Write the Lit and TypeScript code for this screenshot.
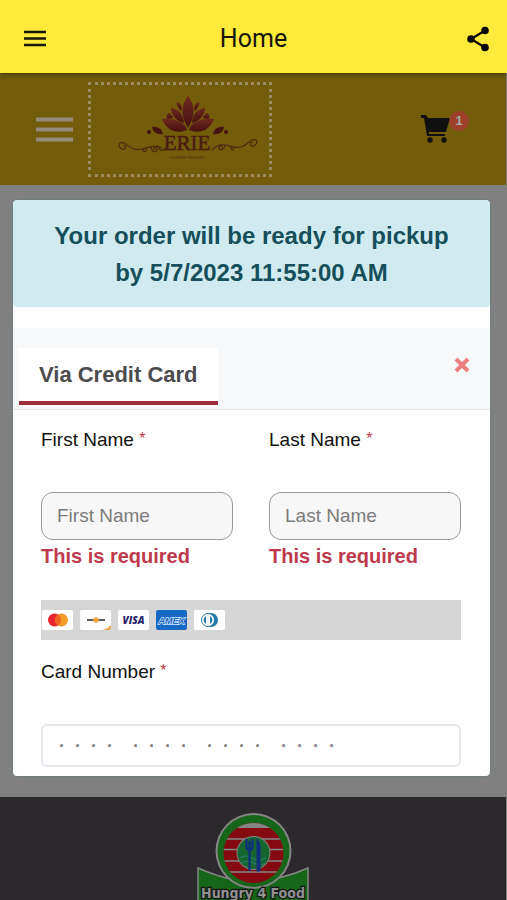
import { LitElement, html, css, svg } from "lit";
import { customElement, property } from "lit/decorators.js";

@customElement("name-field")
class NameField extends LitElement {
  @property() label = "";

  static styles = css`
    :host { display: block; min-width: 0; font-size: 19px; }
    .label { display: block; line-height: 24px; color: #111; }
    .star { color: #b83a4b; font-size: 16px; line-height: 16px; vertical-align: 2px; }
    .box {
      display: block; box-sizing: border-box; width: 100%; height: 48px;
      margin-top: 40px; padding: 0 15px; border: 1px solid #999;
      border-radius: 12px; background: #f7f7f8; font: inherit; color: #111;
    }
    .box::placeholder { color: #7b7b7b; opacity: 1; }
    .error { margin: 4px 0 0; font-size: 20px; line-height: 24px; font-weight: 700; color: #bd3a4c; }
  `;

  render() {
    return html`
      <label class="label" for="field">${this.label} <span class="star">*</span></label>
      <input id="field" class="box" type="text" placeholder=${this.label} />
      <p class="error">This is required</p>
    `;
  }
}

const menuIcon = svg`<path d="M1 2h22M1 8.500h22M1 15h22" stroke="#17150a" stroke-width="2.500"/>`;

const lotus = svg`
  <linearGradient id="petal" x1="0" y1="0" x2="0" y2="1">
    <stop offset="0" stop-color="#6e2a1e"/><stop offset="1" stop-color="#47110f"/>
  </linearGradient>
  <g fill="url(#petal)">
    <path d="M188 96c-7 9-8 19 0 32c8-13 7-23 0-32z"/>
    <path d="M184 123c-1-9-5-14-13-15c0 7 5 13 13 15zM192 123c1-9 5-14 13-15c0 7-5 13-13 15z"/>
    <path d="M177 102c-1 3 1 6 4 9c2-4 0-8-4-9zM199 102c1 3-1 6-4 9c-2-4 0-8 4-9z"/>
    <path d="M169 113c-3 1-3 5-1 6l5-1c0-2-2-4-4-5zM207 113c3 1 3 5 1 6l-5-1c0-2 2-4 4-5z"/>
    <path d="M187 130c-2-8-12-12-25-11c4 10 13 16 25 11zM189 130c2-8 12-12 25-11c-4 10-13 16-25 11z"/>
  </g>
  <g fill="#471311">
    <path d="M152 127c6-1 10 2 11 7c-6 1-10-2-11-7zM224 127c-6-1-10 2-11 7c6 1 10-2 11-7z"/>
    <circle cx="149" cy="132" r="2"/><circle cx="226" cy="132" r="2"/>
  </g>
  <g fill="none" stroke="#4b2a14" stroke-width="1.200">
    <path d="M124 145c3 3 1 5-2 4c-5-3-3-8 2-6c6 4 10 8 18 6c9-2 14-5 20-1"/>
    <path d="M143 149c0 4 4 3 3-1M151 147c1 6 6 6 6 2c-1-3-4-1-3 1M158 147c2 4 5 4 8 1"/>
    <path d="M252 142c-3 3-1 5 2 4c5-3 3-8-2-6c-6 4-10 9-18 7c-9-2-14-5-22 3"/>
    <path d="M234 147c0 4-4 3-3-1M225 145c-1 6-6 6-6 2c1-3 4-1 3 1"/>
  </g>
  <text x="187" y="150" text-anchor="middle" font-family="Liberation Serif, serif" font-size="21" fill="#4b1b14" stroke="#4b1b14" stroke-width="0.500">ERIE</text>
  <text x="187" y="159" text-anchor="middle" font-family="Liberation Serif, serif" font-size="5" fill="#4b2a14">CURRY HOUSE</text>
`;

const footerLogo = svg`
  <path d="M199 867q32 14 54 13q30-1 56-13v60H199z" fill="#176518" stroke="#858585" stroke-width="1.500"/>
  <circle cx="254.500" cy="850" r="38" fill="#858585"/>
  <circle cx="254.500" cy="850" r="36" fill="#176518"/>
  <clipPath id="disc"><circle cx="254.500" cy="852" r="30"/></clipPath>
  <g clip-path="url(#disc)">
    <path d="M220 820h70v70h-70z" fill="#850a10"/>
    <path d="M220 820h70v7h-70z" fill="#858585"/>
    <path d="M220 838h70M220 848.500h70M220 860h70M220 871h70" stroke="#858585" stroke-width="1.500"/>
  </g>
  <circle cx="254.500" cy="852" r="17" fill="#858585"/>
  <circle cx="254.500" cy="852" r="16" fill="#176530"/>
  <path d="M241 857q6-4 12 0t14 0M243 862q6-4 12 0t11 0" fill="none" stroke="#2b7d70" stroke-width="1.200"/>
  <path d="M250.500 840v30M247.500 838v7q0 4 3 4q3 0 3-4v-7" fill="none" stroke="#102e80" stroke-width="2.200"/>
  <path d="M258 870v-32q4 5 3 14v18z" fill="#102e80" stroke="#102e80"/>
  <text x="254" y="897" text-anchor="middle" font-family="DejaVu Sans Condensed, sans-serif" font-weight="700" font-size="14" fill="#909090" stroke="#161616" stroke-width="2.500" paint-order="stroke">Hungry 4 Food</text>
`;

const cards = [
  { name: "Mastercard", art: svg`<rect width="31" height="20" rx="2" fill="#fff"/><circle cx="12.500" cy="10" r="6.500" fill="#e62530"/><circle cx="19.500" cy="10" r="6.500" fill="#f79b27"/><path d="M16 4.500a6.500 6.500 0 0 1 0 11a6.500 6.500 0 0 1 0-11z" fill="#f06420"/>` },
  { name: "Discover", art: svg`<rect width="31" height="20" rx="2" fill="#fff"/><path d="M7 10h18" stroke="#5d5d5d" stroke-width="2"/><circle cx="16" cy="10" r="2.800" fill="#eda33d"/><path d="M22 20q6-1 9-5v3q0 2-2 2z" fill="#eda33d"/>` },
  { name: "Visa", art: svg`<rect width="31" height="20" rx="2" fill="#fff"/><text x="15.500" y="14" text-anchor="middle" font-family="Open Sans, sans-serif" font-size="10" font-weight="800" font-style="italic" fill="#29246b">VISA</text>` },
  { name: "American Express", art: svg`<rect width="31" height="20" rx="2" fill="#1769c6"/><text x="15.500" y="13.500" text-anchor="middle" font-family="Liberation Sans, sans-serif" font-size="9" font-weight="700" font-style="italic" fill="#1769c6" stroke="#d4e6f8" stroke-width="1.400" paint-order="stroke">AMEX</text>` },
  { name: "Diners Club", art: svg`<rect width="31" height="20" rx="2" fill="#fff"/><path d="M14 3h3a7 7 0 0 1 0 14h-3z" fill="#2279a8"/><circle cx="14" cy="10" r="6.500" fill="#fff" stroke="#2279a8"/><path d="M12 6a4.500 4.500 0 0 0 0 8zM16 6a4.500 4.500 0 0 1 0 8z" fill="#2279a8"/>` },
];

const group = "·\u00a0\u00a0·\u00a0\u00a0·\u00a0\u00a0·";
const cardMask = [group, group, group, group].join("\u00a0\u00a0\u00a0\u00a0");

@customElement("app-root")
class AppRoot extends LitElement {
  static styles = css`
    :host {
      display: flex; flex-direction: column; min-height: 100vh;
      background: #808080; color: #111;
      font: 19px "Liberation Sans", Arial, sans-serif;
    }
    * { box-sizing: border-box; }
    svg { display: block; }
    button { padding: 0; border: 0; background: none; font: inherit; cursor: pointer; }
    .appbar {
      display: grid; grid-template-columns: 1fr auto 1fr; align-items: center;
      height: 73px; padding: 4px 17px 0 23px; background: #ffea3b;
      box-shadow: 0 1px 5px rgba(40, 28, 0, 0.7); z-index: 1;
    }
    .share { justify-self: end; }
    .menu { justify-self: start; }
    .title { margin: 0 0 0 -6px; font: 400 25px/32px Roboto, sans-serif; color: #17150a; }
    .store {
      display: flex; align-items: center; height: 112px; padding: 0 36px;
      margin-right: 1px; background: #735c0a;
    }
    .brand { margin-left: 15px; border: 3px dotted #9b8c62; width: 184px; height: 95px; }
    .cart { position: relative; margin: 0 20px 0 auto; }
    .badge {
      position: absolute; left: 29px; top: -4px; width: 20px; height: 20px;
      border-radius: 10px; background: #9b4029; color: #aaa;
      font-size: 13px; font-weight: 700; line-height: 20px; text-align: center;
    }
    .stage { padding: 14px 16px 20px 12px; }
    .dialog {
      border: 1px solid #6f7c80; border-radius: 5px; background: #fefefe;
      overflow: hidden;
    }
    .notice {
      margin: 0; padding: 17px 32px 16px; border-radius: 4px; background: #d0ebf0;
      color: #154f5b; font-size: 24px; font-weight: 700; line-height: 37px; text-align: center;
    }
    .tabs {
      display: flex; align-items: flex-start; justify-content: space-between;
      height: 82px; margin-top: 21px; padding: 20px 20px 0 6px;
      background: #f7f8fa; border-bottom: 1px solid #e6e6ea;
    }
    .tab {
      height: 57px; padding: 0 20px; border-bottom: 4px solid #9f2f3e;
      background: #fff; color: #4b4b4e; font-size: 22px; font-weight: 700;
    }
    .close { margin-top: 9px; }
    .form { padding: 18px 29px 9px 28px; }
    .names { display: grid; grid-template-columns: 1fr 1fr; gap: 36px; }
    .cards {
      display: flex; align-items: center; gap: 7px; height: 40px; margin: 32px 0 20px;
      padding-left: 1px; background: #d6d6d6;
    }
    .label { display: block; line-height: 24px; }
    .star { color: #b83a4b; font-size: 16px; line-height: 16px; vertical-align: 2px; }
    .number {
      display: block; width: 100%; height: 43px; margin-top: 40px; padding: 2px 16px 0;
      border: 2px solid #e6e6ed; border-radius: 6px; background: #fefefe;
      font: 18px "Liberation Sans", Arial, sans-serif; color: #111;
    }
    .number::placeholder { color: #858585; font-weight: 700; opacity: 1; }
    .footer {
      flex: 1; display: flex; justify-content: center; min-height: 104px;
      margin-right: 1px; padding-top: 15px; background: #2b292b; overflow: hidden;
    }
  `;

  render() {
    return html`
      <header class="appbar">
        <button class="menu" aria-label="Menu"><svg width="24" height="17" viewBox="0 0 24 17">${menuIcon}</svg></button>
        <h1 class="title">Home</h1>
        <button class="share" aria-label="Share">
          <svg width="24" height="26" viewBox="0 0 24 26" fill="#080804">
            <path d="M19 4.500L5 13l14 8.500" fill="none" stroke="#080804" stroke-width="2.200"/>
            <circle cx="19" cy="4.500" r="3.800"/><circle cx="5" cy="13" r="3.800"/><circle cx="19" cy="21.500" r="3.800"/>
          </svg>
        </button>
      </header>
      <div class="store">
        <button aria-label="Store menu">
          <svg width="37" height="25" viewBox="0 0 37 25"><path d="M0 2.500h37M0 12.500h37M0 22.500h37" stroke="#958c7c" stroke-width="4"/></svg>
        </button>
        <a class="brand" href="#" aria-label="Erie Curry House">
          <svg width="178" height="89" viewBox="91 85 178 89">${lotus}</svg>
        </a>
        <button class="cart" aria-label="Cart">
          <svg width="30" height="28" viewBox="0 0 30 28" fill="#101010">
            <path d="M1 0h5l2 3h22l-4 14H9v2h16v2H7L4 3H1z"/>
            <circle cx="10" cy="25" r="2.700"/><circle cx="24" cy="25" r="2.700"/>
          </svg>
          <span class="badge">1</span>
        </button>
      </div>
      <main class="stage">
        <section class="dialog" role="dialog" aria-label="Payment">
          <p class="notice">Your order will be ready for pickup by 5/7/2023 11:55:00 AM</p>
          <div class="tabs">
            <button class="tab" role="tab" aria-selected="true">Via Credit Card</button>
            <button class="close" aria-label="Close">
              <svg width="16" height="16" viewBox="0 0 16 16"><path d="M2 2l12 12M14 2L2 14" stroke="#ed7e7e" stroke-width="4"/></svg>
            </button>
          </div>
          <form class="form">
            <div class="names">
              <name-field label="First Name"></name-field>
              <name-field label="Last Name"></name-field>
            </div>
            <div class="cards">
              ${cards.map((c) => html`<svg width="31" height="20" viewBox="0 0 31 20" role="img" aria-label=${c.name}>${c.art}</svg>`)}
            </div>
            <label class="label" for="number">Card Number <span class="star">*</span></label>
            <input id="number" class="number" type="text" inputmode="numeric" placeholder=${cardMask} />
          </form>
        </section>
      </main>
      <footer class="footer">
        <svg width="112" height="89" viewBox="198 811 112 89" role="img" aria-label="Hungry 4 Food">${footerLogo}</svg>
      </footer>
    `;
  }
}
